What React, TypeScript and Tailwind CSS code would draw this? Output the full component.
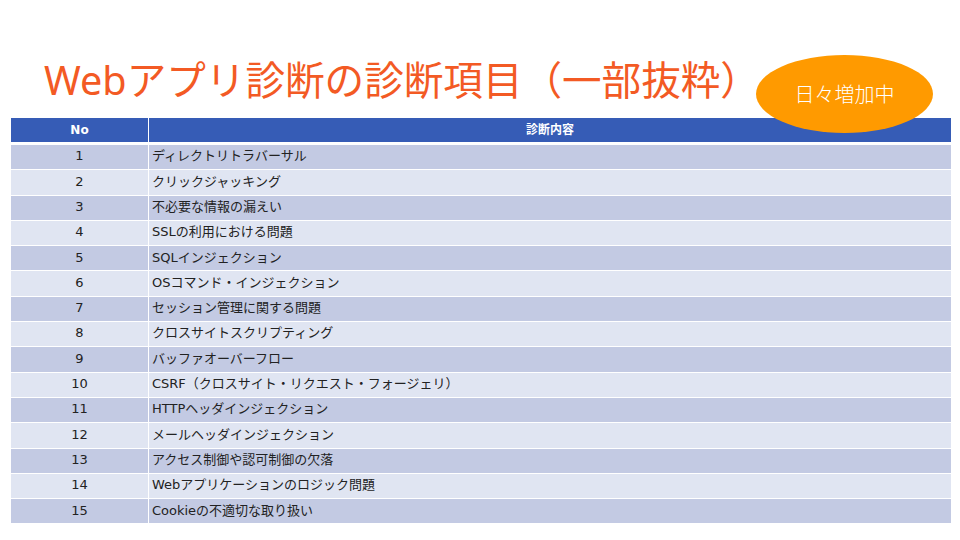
const items = [
  "ディレクトリトラバーサル",
  "クリックジャッキング",
  "不必要な情報の漏えい",
  "SSLの利用における問題",
  "SQLインジェクション",
  "OSコマンド・インジェクション",
  "セッション管理に関する問題",
  "クロスサイトスクリプティング",
  "バッファオーバーフロー",
  "CSRF（クロスサイト・リクエスト・フォージェリ）",
  "HTTPヘッダインジェクション",
  "メールヘッダインジェクション",
  "アクセス制御や認可制御の欠落",
  "Webアプリケーションのロジック問題",
  "Cookieの不適切な取り扱い",
];

export default function App() {
  return (
    <main
      className="relative w-[960px] h-[540px] bg-white overflow-hidden"
      style={{ fontFamily: '"DejaVu Sans", "Noto Sans CJK JP", sans-serif' }}
    >
      <h1
        className="pt-[60px] pl-[44px] text-[39.6px] leading-[40px] text-[#f35a24] whitespace-nowrap"
        style={{ fontFamily: '"Noto Sans", "Noto Sans CJK JP", sans-serif' }}
      >
        Webアプリ診断の診断項目（一部抜粋）
      </h1>

      <div className="mt-[18px] ml-[11px] w-[940px]">
        <div className="flex h-[27px] border-b-[3px] border-white bg-[#365cb6] text-white font-bold text-[12px]">
          <div className="w-[137px] flex items-center justify-center">No</div>
          <div className="flex-1 flex items-center justify-center border-l-[1.5px] border-white">
            診断内容
          </div>
        </div>
        {items.map((item, i) => (
          <div
            key={i}
            className={
              "flex h-[25.3px] border-b border-white text-[13px] text-[#222222] " +
              (i % 2 === 0 ? "bg-[#c3cae3]" : "bg-[#e0e5f2]")
            }
          >
            <div className="w-[137px] pb-[2px] flex items-center justify-center">{i + 1}</div>
            <div className="flex-1 pb-[2px] flex items-center pl-[3px] border-l-[1.5px] border-white">
              {item}
            </div>
          </div>
        ))}
      </div>

      <div
        className="absolute left-[756px] top-[55px] w-[177px] h-[78px] rounded-[50%] bg-[#ff9a00] flex items-center justify-center text-white text-[20px] font-light"
        style={{ fontFamily: '"Noto Sans CJK JP", sans-serif' }}
      >
        日々増加中
      </div>
    </main>
  );
}
